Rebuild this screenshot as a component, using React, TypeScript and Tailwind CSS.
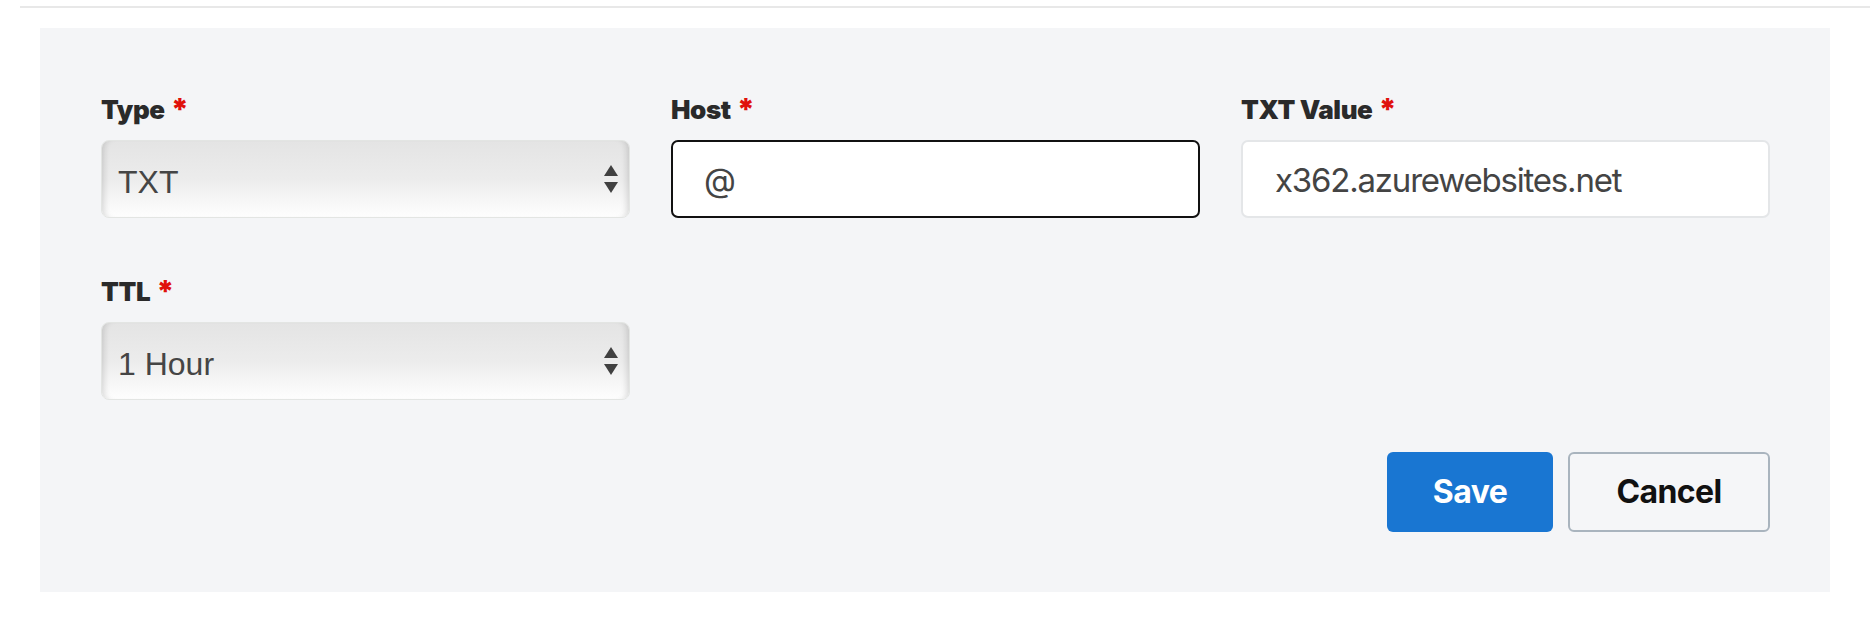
import React from "react";

const Arrows = () => (
  <svg width="14" height="28" viewBox="0 0 14 28" className="shrink-0">
    <polygon points="7,0 14,11 0,11" fill="#404040" />
    <polygon points="0,17 14,17 7,28" fill="#404040" />
  </svg>
);

const Label = ({ text }: { text: string }) => (
  <div className="h-[32px] flex items-center text-[26px] leading-[32px] font-black text-[#2a2a2a] tracking-[-0.4px] font-['Inter',sans-serif]">
    <span>{text}</span>
    <span className="ml-[6px] text-[#e0110b] text-[30px] self-start leading-[30px]">*</span>
  </div>
);

const SelectBox = ({ value }: { value: string }) => (
  <div className="mt-[14px] h-[78px] rounded-[8px] border border-[#e3e5e3] bg-gradient-to-b from-[#e4e4e4] via-[#ececec] to-[#fefefe] shadow-[inset_7px_0_6px_-5px_rgba(0,0,0,0.14),inset_-7px_0_6px_-5px_rgba(0,0,0,0.14)] flex items-center justify-between pl-[16px] pr-[11px]">
    <span className="pt-[6px] text-[32px] text-[#454545] font-['Liberation_Sans',Arial,sans-serif]">{value}</span>
    <Arrows />
  </div>
);

export default function App() {
  return (
    <div className="w-[1870px] h-[620px] bg-white">
      <div className="pt-[6px] pl-[20px]">
        <div className="h-[2px] bg-[#e8e8e8]" />
      </div>
      <div className="mt-[20px] ml-[40px] w-[1790px] bg-[#f4f5f7] pt-[66px] pb-[60px] pl-[61px] pr-[60px]">
        <div className="grid grid-cols-3 gap-x-[41px] gap-y-[58px]">
          <div className="flex flex-col">
            <Label text="Type" />
            <SelectBox value="TXT" />
          </div>
          <div className="flex flex-col">
            <Label text="Host" />
            <div className="mt-[14px] h-[78px] rounded-[7px] border-2 border-[#111] bg-white flex items-center pl-[31px]">
              <span className="pt-[4px] text-[33px] text-[#444] font-['Inter',sans-serif]">@</span>
            </div>
          </div>
          <div className="flex flex-col">
            <Label text="TXT Value" />
            <div className="mt-[14px] h-[78px] rounded-[7px] border-2 border-[#e4e6e8] bg-white flex items-center pl-[32px]">
              <span className="pt-[4px] text-[33px] text-[#444] tracking-[-1.2px] font-['Inter',sans-serif]">x362.azurewebsites.net</span>
            </div>
          </div>
          <div className="flex flex-col">
            <Label text="TTL" />
            <SelectBox value="1 Hour" />
          </div>
        </div>
        <div className="mt-[52px] flex justify-end gap-[15px]">
          <button className="w-[166px] h-[80px] rounded-[6px] bg-[#1976d2] text-white text-[32px] font-bold tracking-[-0.6px] font-['Inter',sans-serif]">
            Save
          </button>
          <button className="w-[202px] h-[80px] rounded-[6px] border-2 border-[#a9b4be] bg-[#f5f6f8] text-[#111] text-[32px] font-bold tracking-[-0.6px] font-['Inter',sans-serif]">
            Cancel
          </button>
        </div>
      </div>
    </div>
  );
}
